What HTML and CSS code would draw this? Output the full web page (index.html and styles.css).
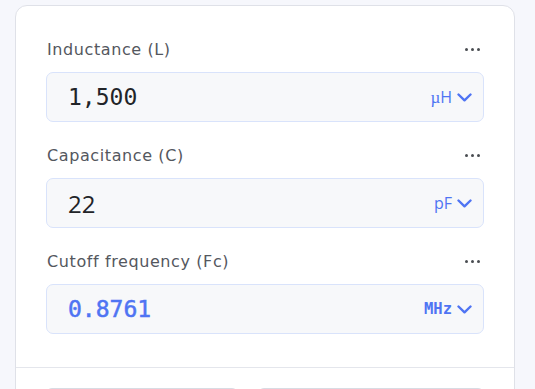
FILE: index.html
```html
<!DOCTYPE html>
<html>
<head>
<meta charset="utf-8">
<link rel="stylesheet" href="styles.css">
</head>
<body>
<div class="card">
  <div class="card-body">
    <div class="field">
      <div class="label-row">
        <span class="label">Inductance (L)</span>
        <span class="more"><i></i><i></i><i></i></span>
      </div>
      <div class="input">
        <span class="value mono">1,500</span>
        <span class="unit"><span class="unit-text"><span class="mu">µ</span>H</span>
          <svg class="chev" width="15" height="9" viewBox="0 0 15 9"><path d="M1.5 1.5 L7.5 7.3 L13.5 1.5" fill="none" stroke="currentColor" stroke-width="2.4" stroke-linecap="round" stroke-linejoin="round"/></svg>
        </span>
      </div>
    </div>
    <div class="field">
      <div class="label-row">
        <span class="label">Capacitance (C)</span>
        <span class="more"><i></i><i></i><i></i></span>
      </div>
      <div class="input">
        <span class="value sans">22</span>
        <span class="unit"><span class="unit-text">pF</span>
          <svg class="chev" width="15" height="9" viewBox="0 0 15 9"><path d="M1.5 1.5 L7.5 7.3 L13.5 1.5" fill="none" stroke="currentColor" stroke-width="2.4" stroke-linecap="round" stroke-linejoin="round"/></svg>
        </span>
      </div>
    </div>
    <div class="field">
      <div class="label-row">
        <span class="label">Cutoff frequency (Fc)</span>
        <span class="more"><i></i><i></i><i></i></span>
      </div>
      <div class="input">
        <span class="value mono result">0.8761</span>
        <span class="unit"><span class="unit-text mono-unit">MHz</span>
          <svg class="chev" width="15" height="9" viewBox="0 0 15 9"><path d="M1.5 1.5 L7.5 7.3 L13.5 1.5" fill="none" stroke="currentColor" stroke-width="2.4" stroke-linecap="round" stroke-linejoin="round"/></svg>
        </span>
      </div>
    </div>
  </div>
  <div class="card-footer">
    <button class="btn btn-a"></button>
    <button class="btn btn-b"></button>
  </div>
</div>
</body>
</html>
```

FILE: styles.css
```css
html, body {
  margin: 0;
  padding: 0;
  background: #f6f7fc;
  overflow: hidden;
  height: 389px;
}
.card {
  margin: 5px 0 0 15px;
  width: 500px;
  box-sizing: border-box;
  background: #ffffff;
  border: 1px solid #dfe1e8;
  border-radius: 12px;
  height: 420px;
}
.card-body {
  padding: 32px 30px 33px 30px;
  display: flex;
  flex-direction: column;
  gap: 22px;
}
.label-row {
  display: flex;
  justify-content: space-between;
  align-items: center;
  height: 22px;
  margin-bottom: 12px;
  padding-left: 1px;
  padding-top: 1px;
  box-sizing: border-box;
}
.label {
  font-family: "DejaVu Sans", sans-serif;
  font-size: 16px;
  letter-spacing: 0.6px;
  color: #54575e;
}
.more {
  display: flex;
  gap: 2.5px;
  margin-right: 4px;
}
.more i {
  width: 3.5px;
  height: 3.5px;
  border-radius: 50%;
  background: #4a4d52;
  display: block;
}
.input {
  height: 50px;
  box-sizing: border-box;
  border: 1px solid #d9e3fb;
  border-radius: 7px;
  background: #f7f8fa;
  display: flex;
  align-items: center;
  justify-content: space-between;
  padding: 0 11px 0 21px;
}
.value {
  color: #222428;
}
.mono {
  font-family: "DejaVu Sans Mono", monospace;
  font-size: 23px;
}
.sans {
  font-family: "Open Sans", sans-serif;
  font-size: 24px;
  font-weight: 500;
}
.result {
  color: #4f74f3;
  -webkit-text-stroke: 0.5px #4f74f3;
}
.unit {
  display: flex;
  align-items: center;
  gap: 5px;
  color: #4f74f3;
}
.unit-text {
  font-family: "Open Sans", sans-serif;
  font-size: 16px;
  font-weight: 500;
}
.mu {
  font-family: "Liberation Serif", serif;
  font-size: 17px;
  font-weight: normal;
}
.mono-unit {
  font-family: "DejaVu Sans Mono", monospace;
  font-size: 15.5px;
  font-weight: bold;
}
.chev {
  display: block;
}
.card-footer {
  border-top: 1px solid #e4e6ec;
  padding: 20px 0 0 30px;
  display: flex;
  gap: 20px;
}
.btn {
  height: 40px;
  border: 1px solid #d8dbe3;
  border-radius: 6px;
  background: #ffffff;
  padding: 0;
}
.btn-a { width: 192px; }
.btn-b { width: 226px; }
```
